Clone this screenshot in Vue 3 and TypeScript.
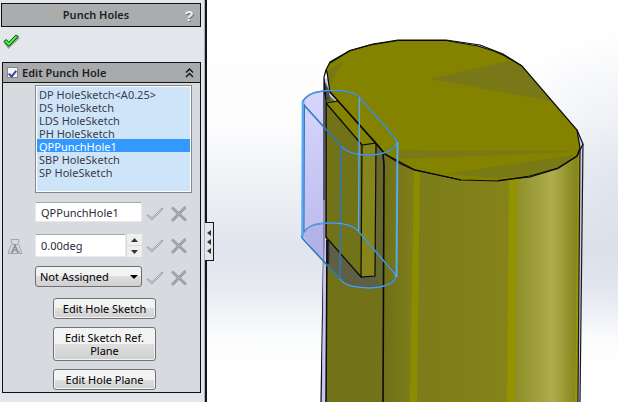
<script setup lang="ts">
import { ref } from 'vue'

const sketches: string[] = [
  'DP HoleSketch<A0.25>',
  'DS HoleSketch',
  'LDS HoleSketch',
  'PH HoleSketch',
  'QPPunchHole1',
  'SBP HoleSketch',
  'SP HoleSketch',
]
const assignments: string[] = ['Not Assigned']

const enabled = ref(true)
const selected = ref('QPPunchHole1')
const holeName = ref('QPPunchHole1')
const angle = ref(0)
const angleText = ref('0.00deg')
const assignment = ref('Not Assigned')

function stepAngle(delta: number): void {
  angle.value += delta
  angleText.value = `${angle.value.toFixed(2)}deg`
}
</script>

<template>
  <div class="workspace">
    <aside class="panel">
      <header class="title">
        <h1>Punch Holes</h1>
        <button class="plain help" type="button" aria-label="Help">?</button>
      </header>

      <button class="plain accept" type="button" aria-label="OK">
        <svg width="17" height="15" viewBox="0 0 17 15">
          <path d="M2 8.500L5.500 13.500L16 3.500" fill="none" stroke="#9aa39c" stroke-width="2" />
          <path d="M.8 7.500L3.300 5.500L5.800 8.300L12.800 1L15.300 2.600L5.800 12.500Z" fill="#1fdc1f" stroke="#0b5c10" />
          <path d="M3 7L5.800 10L13 2.500" fill="none" stroke="#7dff70" />
        </svg>
      </button>

      <section class="group">
        <header class="group-head">
          <label class="toggle">
            <input v-model="enabled" type="checkbox" />
            <span>Edit Punch Hole</span>
          </label>
          <button class="plain collapse" type="button" aria-label="Collapse">
            <svg width="9" height="10" viewBox="0 0 9 10">
              <path d="M1 4.500L4.500 1L8 4.500M1 9L4.500 5.500L8 9" fill="none" stroke="#111" stroke-width="1.400" />
            </svg>
          </button>
        </header>

        <div class="group-body">
          <select v-model="selected" class="list" size="8" aria-label="Hole sketches">
            <option v-for="name in sketches" :key="name" :value="name">{{ name }}</option>
          </select>

          <div class="row">
            <span class="lead"></span>
            <input v-model="holeName" class="field name" type="text" aria-label="Hole name" />
            <button v-for="kind in ['Apply', 'Cancel']" :key="kind" class="plain mark" type="button" :aria-label="kind + ' name'">
              <svg v-if="kind === 'Apply'" width="18" height="14" viewBox="0 0 18 14">
                <path d="M1 8.500L2 7.500L6 11L16 1L17 2L6 13Z" fill="#cfd1d5" stroke="#999b9e" stroke-width=".9" />
              </svg>
              <svg v-else width="18" height="16" viewBox="0 0 18 16">
                <path d="M2 1.500L16 14.500M15.500 1L2 15" fill="none" stroke="#929497" stroke-width="2.600" />
                <path d="M2 1.500L16 14.500M15.500 1L2 15" fill="none" stroke="#b6b8bb" />
              </svg>
            </button>
          </div>

          <div class="row">
            <span class="lead">
              <svg width="16" height="17" viewBox="0 0 16 17">
                <path d="M4 1.500H12L11 6.500H5ZM4 7L1 15.500H15L12 7" fill="none" stroke="#a4a6a9" />
                <path d="M5 14L8 7.500L11 14M6 12H10M4 14H6.500M9.500 14H12.500" fill="none" stroke="#8e9093" stroke-width="1.600" />
              </svg>
            </span>
            <div class="spinner">
              <input v-model="angleText" class="field" type="text" aria-label="Angle" />
              <div class="steps">
                <button type="button" aria-label="Increase" @click="stepAngle(1)">
                  <svg width="7" height="4" viewBox="0 0 7 4"><path d="M0 4L3.500 0L7 4Z" fill="#333" /></svg>
                </button>
                <button type="button" aria-label="Decrease" @click="stepAngle(-1)">
                  <svg width="7" height="4" viewBox="0 0 7 4"><path d="M0 0L3.500 4L7 0Z" fill="#333" /></svg>
                </button>
              </div>
            </div>
            <button v-for="kind in ['Apply', 'Cancel']" :key="kind" class="plain mark" type="button" :aria-label="kind + ' angle'">
              <svg v-if="kind === 'Apply'" width="18" height="14" viewBox="0 0 18 14">
                <path d="M1 8.500L2 7.500L6 11L16 1L17 2L6 13Z" fill="#cfd1d5" stroke="#999b9e" stroke-width=".9" />
              </svg>
              <svg v-else width="18" height="16" viewBox="0 0 18 16">
                <path d="M2 1.500L16 14.500M15.500 1L2 15" fill="none" stroke="#929497" stroke-width="2.600" />
                <path d="M2 1.500L16 14.500M15.500 1L2 15" fill="none" stroke="#b6b8bb" />
              </svg>
            </button>
          </div>

          <div class="row">
            <span class="lead"></span>
            <div class="combo">
              <select v-model="assignment" aria-label="Assignment">
                <option v-for="item in assignments" :key="item" :value="item">{{ item }}</option>
              </select>
              <svg width="8" height="4" viewBox="0 0 8 4"><path d="M0 0H8L4 4Z" fill="#000" /></svg>
            </div>
            <button v-for="kind in ['Apply', 'Cancel']" :key="kind" class="plain mark" type="button" :aria-label="kind + ' assignment'">
              <svg v-if="kind === 'Apply'" width="18" height="14" viewBox="0 0 18 14">
                <path d="M1 8.500L2 7.500L6 11L16 1L17 2L6 13Z" fill="#cfd1d5" stroke="#999b9e" stroke-width=".9" />
              </svg>
              <svg v-else width="18" height="16" viewBox="0 0 18 16">
                <path d="M2 1.500L16 14.500M15.500 1L2 15" fill="none" stroke="#929497" stroke-width="2.600" />
                <path d="M2 1.500L16 14.500M15.500 1L2 15" fill="none" stroke="#b6b8bb" />
              </svg>
            </button>
          </div>

          <div class="actions">
            <button type="button">Edit Hole Sketch</button>
            <button type="button">Edit Sketch Ref. Plane</button>
            <button type="button">Edit Hole Plane</button>
          </div>
        </div>
      </section>

      <button class="plain handle" type="button" aria-label="Hide panel">
        <svg width="4" height="24" viewBox="0 0 4 24">
          <path d="M4 0V6L0 3ZM4 9V15L0 12ZM4 18V24L0 21Z" fill="#333" />
        </svg>
      </button>
    </aside>

    <main class="view">
      <svg viewBox="207 0 411 402" preserveAspectRatio="xMinYMin slice" role="img" aria-label="Part model">
        <defs>
          <linearGradient id="sky" x1="0" y1="0" x2="0" y2="1">
            <stop offset="0" stop-color="#fff" />
            <stop offset=".3" stop-color="#fdfdfe" />
            <stop offset=".5" stop-color="#eceef3" />
            <stop offset=".62" stop-color="#e0e4ec" />
            <stop offset=".71" stop-color="#e6e9f0" />
            <stop offset=".83" stop-color="#fafbfc" />
            <stop offset=".92" stop-color="#fff" />
          </linearGradient>
          <radialGradient id="glow" gradientUnits="userSpaceOnUse" cx="640" cy="190" r="160">
            <stop offset="0" stop-color="#cfd6e4" stop-opacity=".55" />
            <stop offset="1" stop-color="#cfd6e4" stop-opacity="0" />
          </radialGradient>
          <linearGradient id="side" gradientUnits="userSpaceOnUse" x1="384" y1="0" x2="580" y2="0">
            <stop offset="0" stop-color="#6f6f18" />
            <stop offset=".14" stop-color="#7d7d1a" />
            <stop offset=".2" stop-color="#7c7c1a" />
            <stop offset=".64" stop-color="#84841a" />
            <stop offset=".68" stop-color="#8f8f2a" />
            <stop offset=".86" stop-color="#adad4e" />
            <stop offset=".98" stop-color="#85851c" />
          </linearGradient>
          <linearGradient id="glass" x1="0" y1="0" x2="0" y2="1">
            <stop offset="0" stop-color="#d6d6ff" />
            <stop offset="1" stop-color="#b9b9ec" />
          </linearGradient>
        </defs>
        <rect x="207" width="411" height="402" fill="url(#sky)" />
        <rect x="207" width="411" height="402" fill="url(#glow)" />

        <!-- body sides -->
        <path d="M324 78L321 402H580L583 145L577 131L400 110Z" fill="#c9c9ec" />
        <path d="M326 92L326 402H384V150Z" fill="#727219" />
        <path d="M384 150L383 402H577L580 150Z" fill="url(#side)" />
        <path d="M414 168H420L417 402H410Z" fill="#8c8c00" />
        <path d="M509 178H517L515 402H507Z" fill="#939300" />
        <path d="M578 150H580L578 402H575Z" fill="#969605" />

        <!-- top face -->
        <path d="M326 70L330 62L349 51L370 45L398 40.500L446 40.500L478 46L494 51L505 56L522 66L577 130L580 148L577 156L558 168L530 176L498 181L461 180L414 170L399 163L385 154L330 92Z" fill="#838300" />
        <path d="M430 79L508 61L522 67L551 101Z" fill="#787819" />
        <path d="M395 150L571 151L570 152L400 159Z" fill="#797915" />
        <path d="M447 174L574 155L558 168L530 175L498 178Z" fill="#797915" />
        <path d="M328 72L343 61L330 85Z" fill="#787819" />

        <!-- slot cut -->
        <path d="M326 103L339 101L330 92L376 143L362 145Z" fill="#838300" />
        <path d="M326 103L362 145L361 277L326 237Z" fill="#727219" />
        <path d="M362 145L376 143L375 276L361 277Z" fill="#85851b" />
        <path d="M376 143L385 154L384 285L375 276Z" fill="#68682c" />
        <path d="M326 237L361 277L375 276L383 286L368 288L350 285L340 279L327 264Z" fill="#5f5f42" />
        <path d="M328 240V264" stroke="#26264a" stroke-width="2.500" />
        <path d="M325 82V100L330 101L329 90Z" fill="#4c4c52" />

        <!-- projected volume -->
        <path d="M303 101C307 94 315 91 324 91V261L302 236Z" fill="url(#glass)" />
        <path d="M303 236C309 227 316 224 324 223V261Z" fill="#aeaee6" opacity=".7" />

        <!-- model edges -->
        <g fill="none" stroke="#0a0a0a" stroke-width="1.200">
          <path d="M326 70L330 62L349 51L370 45L398 40.500L446 40.500L478 46L494 51L505 56L522 66L577 130L580 148L577 156L558 168L530 176L498 181L461 180L414 170L399 163L385 154L330 92L327 72Z" />
          <path d="M330 63L350 50.500L373 44L398 40H446L480 45L503 54L522 66M577 130L583 144L577 156L558 168.500L530 177L498 180.500M461 180L414 169.500L385 154" />
          <path d="M326 70L324 77L324 235L321 402M324 77L326 103" />
          <path d="M326 103V238M327 240L326 402" stroke-width="1.500" />
          <path d="M383 154L384 165L383 402" stroke-width="1.600" />
          <path d="M326 103L362 145L376 143M326 103L338 101M330 92L376 143L385 154M362 145L361 277L375 276L376 143M326 237L361 277" />
          <path d="M583 144L580 402M580 150L578 402" stroke="#181820" />
        </g>
        <path d="M324 200L324 235L322.500 402" fill="none" stroke="#c2c2ee" />

        <!-- projected volume edges -->
        <g fill="none" stroke="#2d78b8" stroke-width="1.600">
          <path d="M303 101C307 94 315 91 330 90.500C345 90 354 92 360 98L395 138C400 145 391 155 368 155C355 155 346 152 341 146L304 105C303 104 302 103 303 101Z" />
          <path d="M302 235C307 226 315 223 329 223C344 223 352 225 358 231L395 274C399 280 388 288 368 288C354 287 345 286 340 279L303 239C302 238 301 237 302 235Z" />
          <path d="M341 146L340 279" />
        </g>
        <g fill="none" stroke="#58a8f4">
          <path d="M303 101C307 94 315 91 330 90.500C345 90 354 92 360 98L395 138C400 145 391 155 368 155C355 155 346 152 341 146" stroke-width=".8" />
          <path d="M302 235C307 226 315 223 329 223C344 223 352 225 358 231L395 274C399 280 388 288 368 288C354 287 345 286 340 279" />
          <path d="M359.500 97L358.500 231" stroke-width="1.400" />
          <path d="M397.500 142L396.500 277" stroke-width="2" />
          <path d="M303 101L302.500 237" stroke-width="2.600" />
          <path d="M304.500 104L304 232" stroke="#2d78b8" />
        </g>
      </svg>
    </main>
  </div>
</template>

<style>
body {
  margin: 0;
}
</style>

<style scoped>
.workspace {
  display: grid;
  grid-template-columns: 207px 1fr;
  min-height: 100vh;
  font-family: 'Noto Sans', 'Open Sans', sans-serif;
  font-size: 11px;
  line-height: 13px;
  color: #2b2b38;
}
.workspace * {
  box-sizing: border-box;
}
button,
input,
select {
  margin: 0;
  font: inherit;
  color: inherit;
}
svg {
  display: block;
}
.plain {
  padding: 0;
  border: 0;
  background: none;
}
.panel {
  position: relative;
  padding: 3px 3px 9px 1px;
  background: #e3e6eb;
  border-right: 2px solid #15151c;
  box-shadow: inset -1px 0 #aeb0b8;
}
.title {
  display: flex;
  align-items: center;
  height: 24px;
  margin-right: 1px;
  padding: 0 6px;
  background: #abacae;
  border: 1px solid #111;
}
h1 {
  flex: 1;
  margin: 0;
  font-size: 11px;
  line-height: 16px;
  font-weight: 600;
  text-align: center;
  color: #1e1e22;
}
.help {
  width: 10px;
  font-family: 'Liberation Sans', sans-serif;
  font-size: 15px;
  font-weight: 700;
  color: #eee;
  text-shadow: 1px 1px #777;
}
.accept {
  display: block;
  margin: 7px 0 13px 2px;
}
.group {
  margin: 0 1px;
  border: 1px solid #111;
  background: #d7dade;
}
.group-head {
  display: flex;
  align-items: center;
  justify-content: space-between;
  height: 20px;
  padding: 0 6px 0 4px;
  background: #a9aaac;
  border-bottom: 1px solid #111;
}
.toggle {
  display: flex;
  align-items: center;
  gap: 4px;
  font-size: 11px;
  line-height: 16px;
  font-weight: 600;
  color: #1e1e22;
}
.toggle input {
  appearance: none;
  display: grid;
  place-items: center;
  width: 11px;
  height: 11px;
  background: #f4f5f7;
  border: 1px solid #85878a;
}
.toggle input:checked::before {
  content: '';
  width: 3px;
  height: 6px;
  border: solid #33479a;
  border-width: 0 2px 2px 0;
  transform: rotate(40deg);
}
.group-body {
  padding: 2px 8px 2px 4px;
}
.list {
  appearance: none;
  display: block;
  width: calc(100% - 28px);
  height: 108px;
  margin: 0 0 9px 28px;
  padding: 1px;
  overflow: hidden;
  background: #cee4f8;
  border: 1px solid #85868e;
  border-radius: 0;
  box-shadow: inset 0 0 0 1px #fff;
  outline: 0;
}
.list option {
  min-height: 13px;
  height: 13px;
  padding: 0 2px;
  line-height: 13px;
  color: #3a3c4c;
}
.list option:checked {
  background: #3399ff linear-gradient(#3399ff, #3399ff);
  color: #fff;
}
.row {
  display: grid;
  grid-template-columns: 24px 107px 18px 18px;
  column-gap: 4px;
  align-items: start;
  height: 24px;
  margin-bottom: 8px;
}
.lead,
.row .mark {
  align-self: center;
}
.row .mark:last-child {
  margin-left: 2px;
}
.field {
  width: 100%;
  height: 20px;
  padding: 0 5px;
  border: 1px solid #e8e9ec;
  border-top-color: #a5a7ad;
  border-radius: 2px;
  background: #fff;
  outline: 0;
}
.spinner {
  display: flex;
  height: 23px;
}
.spinner .field {
  flex: 1;
  min-width: 0;
  height: 23px;
}
.steps {
  display: grid;
  width: 16px;
  gap: 1px;
  padding-left: 1px;
}
.steps button {
  display: grid;
  place-items: center;
  padding: 0;
  border: 0;
  background: #efefef;
}
.combo {
  display: flex;
  align-items: center;
}
.combo select {
  appearance: none;
  width: 100%;
  height: 21px;
  padding: 0 4px;
  border: 1px solid #6d6f73;
  border-radius: 3px;
  background: linear-gradient(#f3f3f3 50%, #dedede 50%, #d0d0d0);
  color: #000;
}
.combo svg {
  margin-left: -12px;
  pointer-events: none;
}
.actions {
  display: grid;
  gap: 8px;
  width: 103px;
  margin-left: 46px;
}
.actions button {
  min-height: 21px;
  padding: 3px 8px;
  border: 1px solid #707276;
  border-radius: 3px;
  background: linear-gradient(#f3f3f3 50%, #dedede 50%, #d0d0d0);
  box-shadow: inset 0 0 0 1px #f4f4f4;
  color: #000;
}
.handle {
  position: absolute;
  top: 222px;
  right: -9px;
  display: grid;
  place-items: center end;
  width: 9px;
  height: 39px;
  padding-right: 2px;
  border: 1px solid #15151c;
  border-left: 0;
  background: #e3e6eb;
}
.view {
  min-width: 0;
  height: 100%;
  overflow: hidden;
}
.view svg {
  width: 100%;
  height: 100vh;
}
</style>
